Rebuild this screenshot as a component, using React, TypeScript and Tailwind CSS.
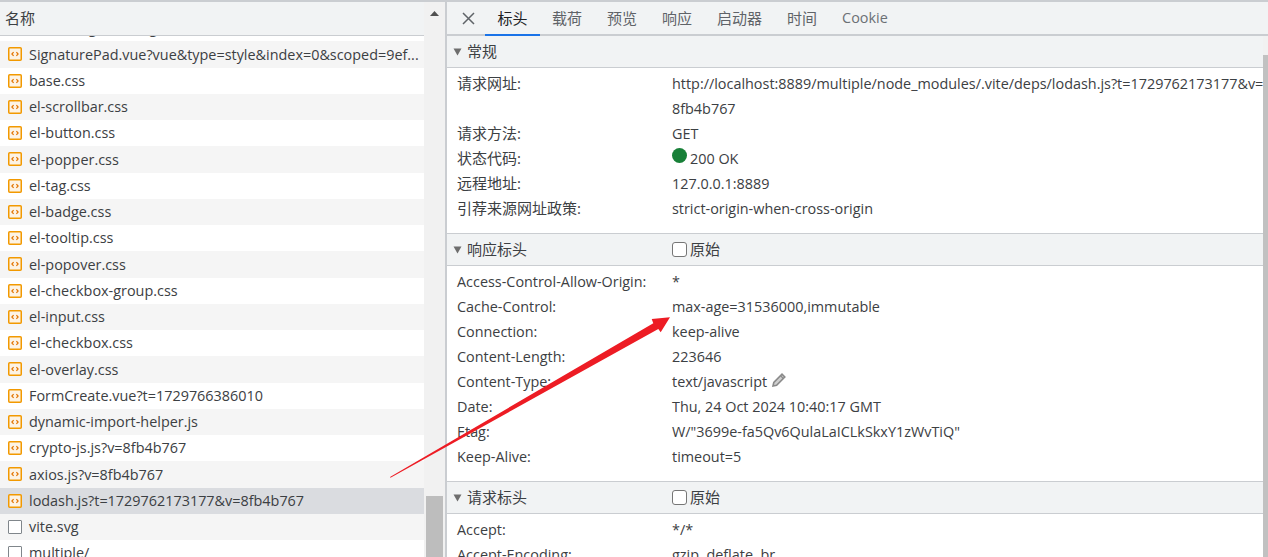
const FONT = "font-['Open_Sans','Noto_Sans_CJK_SC',sans-serif]";

const files: { name: string; kind: "code" | "blank" }[] = [
  { name: "SignaturePad.vue?vue&type=style&index=0&scoped=9ef...", kind: "code" },
  { name: "base.css", kind: "code" },
  { name: "el-scrollbar.css", kind: "code" },
  { name: "el-button.css", kind: "code" },
  { name: "el-popper.css", kind: "code" },
  { name: "el-tag.css", kind: "code" },
  { name: "el-badge.css", kind: "code" },
  { name: "el-tooltip.css", kind: "code" },
  { name: "el-popover.css", kind: "code" },
  { name: "el-checkbox-group.css", kind: "code" },
  { name: "el-input.css", kind: "code" },
  { name: "el-checkbox.css", kind: "code" },
  { name: "el-overlay.css", kind: "code" },
  { name: "FormCreate.vue?t=1729766386010", kind: "code" },
  { name: "dynamic-import-helper.js", kind: "code" },
  { name: "crypto-js.js?v=8fb4b767", kind: "code" },
  { name: "axios.js?v=8fb4b767", kind: "code" },
  { name: "lodash.js?t=1729762173177&v=8fb4b767", kind: "code" },
  { name: "vite.svg", kind: "blank" },
  { name: "multiple/", kind: "blank" },
];

function FileIcon({ kind }: { kind: "code" | "blank" }) {
  if (kind === "blank") {
    return <span className="block w-[14px] h-[14px] shrink-0 border-[1.5px] border-[#80868b] rounded-[1px] bg-white" />;
  }
  return (
    <svg width="14" height="14" viewBox="0 0 14 14" className="shrink-0">
      <rect x="0.75" y="0.75" width="12.5" height="12.5" rx="1" fill="#fdf3e4" stroke="#f29900" strokeWidth="1.5" />
      <path d="M5.6 5.2 3.9 7l1.7 1.8M8.4 5.2 10.1 7 8.4 8.8" fill="none" stroke="#e37400" strokeWidth="1.2" />
    </svg>
  );
}

function Caret() {
  return (
    <svg width="9" height="8" viewBox="0 0 9 8" className="shrink-0">
      <path d="M0.5 0.5h8L4.5 7.5z" fill="#6e6e6e" />
    </svg>
  );
}

function Raw() {
  return (
    <span className="flex items-center gap-[3px] absolute left-[225px]">
      <span className="block w-[15px] h-[15px] border-[1.5px] border-[#767676] rounded-[3px] bg-white" />
      <span>原始</span>
    </span>
  );
}

function SectionHead({ title, raw }: { title: string; raw?: boolean }) {
  return (
    <div className="relative h-[32px] shrink-0 flex items-center bg-[#f1f3f4] border-b border-[#cacdd1] pl-[6px] gap-[5px] text-[15px] text-[#3c4043]">
      <Caret />
      <span>{title}</span>
      {raw && <Raw />}
    </div>
  );
}

function KV({ k, cjk, children }: { k: string; cjk?: boolean; children: React.ReactNode }) {
  return (
    <div className="flex leading-[25px] text-[14.4px] text-[#3c4043]">
      <div className={`w-[215px] shrink-0 ${cjk ? "text-[15px]" : ""}`}>{k}</div>
      <div className="flex-1 whitespace-nowrap">{children}</div>
    </div>
  );
}

export default function App() {
  return (
    <div className={`relative w-[1268px] h-[557px] overflow-hidden bg-white flex border-t-2 border-[#cacdd1] ${FONT}`}>
      {/* left panel */}
      <div className="w-[445px] shrink-0 flex h-full">
        <div className="w-[424px] shrink-0 flex flex-col h-full overflow-hidden">
          <div className="h-[34px] shrink-0 bg-[#f1f3f4] border-b border-[#cacdd1] flex items-center pl-[5px] text-[15px] text-[#3c4043]">
            名称
          </div>
          <div className="flex-1 overflow-hidden">
            <div className="-mt-[21px] text-[14.4px] text-[#3c4043]">
              <div className="h-[26.25px] flex items-center bg-white pl-[8px] gap-[7px] whitespace-nowrap">
                <FileIcon kind="code" />
                <span>el-message-catalog.css</span>
              </div>
              {files.map((f, i) => (
                <div
                  key={f.name}
                  className={`h-[26.25px] flex items-center pl-[8px] gap-[7px] whitespace-nowrap ${
                    i === 17 ? "bg-[#dadce0]" : i % 2 === 0 ? "bg-[#f5f5f5]" : "bg-white"
                  }`}
                >
                  <FileIcon kind={f.kind} />
                  <span>{f.name}</span>
                </div>
              ))}
            </div>
          </div>
        </div>
        <div className="relative w-[21px] shrink-0 h-full bg-[#f1f1f1] flex flex-col items-center">
          <svg width="9" height="5" viewBox="0 0 9 5" className="mt-[9px] shrink-0">
            <path d="M4.5 0 9 5H0z" fill="#505050" />
          </svg>
          <div className="w-[17px] h-[61px] bg-[#bdbdbd] mt-auto" />
        </div>
      </div>

      {/* right panel */}
      <div className="flex-1 min-w-0 flex flex-col h-full border-l-2 border-[#cacdd1]">
        <div className="h-[34px] shrink-0 bg-[#f1f3f4] border-b-2 border-[#cacdd1] flex items-stretch text-[15px] text-[#5f6368] whitespace-nowrap">
          <div className="w-[38px] flex items-center pl-[15px] shrink-0">
            <svg width="13" height="13" viewBox="0 0 13 13">
              <path d="M1 1l11 11M12 1L1 12" stroke="#5f6368" strokeWidth="1.5" fill="none" />
            </svg>
          </div>
          <div className="relative px-[12px] flex items-center justify-center w-[55px] text-[#202124]">
            标头
            <span className="absolute left-0 right-0 -bottom-[2px] h-[2px] bg-[#1a73e8]" />
          </div>
          <div className="pl-[12px] pr-[12.5px] flex items-center">载荷</div>
          <div className="px-[12.5px] flex items-center">预览</div>
          <div className="px-[12.5px] flex items-center">响应</div>
          <div className="px-[12.5px] flex items-center">启动器</div>
          <div className="px-[12.5px] flex items-center">时间</div>
          <div className="px-[12.5px] flex items-center text-[14.4px] text-[#6b7075]">Cookie</div>
        </div>

        <div className="flex-1 min-h-0 flex">
          <div className="flex-1 min-w-0 overflow-hidden">
            <SectionHead title="常规" />
            <div className="pt-[3px] pb-[12px] pl-[10px]">
              <KV k="请求网址:" cjk>
                <div>http://localhost:8889/multiple/node_modules/.vite/deps/lodash.js?t=1729762173177&amp;v=</div>
                <div>8fb4b767</div>
              </KV>
              <KV k="请求方法:" cjk>GET</KV>
              <KV k="状态代码:" cjk>
                <span className="flex items-center gap-[3px]">
                  <span className="block w-[15px] h-[15px] rounded-full bg-[#188038] -mt-[6px]" />
                  200 OK
                </span>
              </KV>
              <KV k="远程地址:" cjk>127.0.0.1:8889</KV>
              <KV k="引荐来源网址政策:" cjk>strict-origin-when-cross-origin</KV>
            </div>

            <div className="border-t border-[#cacdd1]">
              <SectionHead title="响应标头" raw />
            </div>
            <div className="pt-[3px] pb-[12px] pl-[10px]">
              <KV k="Access-Control-Allow-Origin:">*</KV>
              <KV k="Cache-Control:">max-age=31536000,immutable</KV>
              <KV k="Connection:">keep-alive</KV>
              <KV k="Content-Length:">223646</KV>
              <KV k="Content-Type:">
                <span className="flex items-center gap-[4px]">
                  text/javascript
                  <svg width="16" height="16" viewBox="0 0 16 16" className="-mt-[3px]">
                    <path d="M2 14l.8-3.6L11 2.2l2.8 2.8-8.2 8.2z" fill="#cfcfcf" stroke="#8a8a8a" strokeWidth="1.6" />
                    <path d="M9.5 3.7l2.8 2.8" stroke="#8a8a8a" strokeWidth="1.2" />
                  </svg>
                </span>
              </KV>
              <KV k="Date:">Thu, 24 Oct 2024 10:40:17 GMT</KV>
              <KV k="Etag:">W/"3699e-fa5Qv6QulaLaICLkSkxY1zWvTiQ"</KV>
              <KV k="Keep-Alive:">timeout=5</KV>
            </div>

            <div className="border-t border-[#cacdd1]">
              <SectionHead title="请求标头" raw />
            </div>
            <div className="pt-[3px] pl-[10px]">
              <KV k="Accept:">*/*</KV>
              <KV k="Accept-Encoding:">gzip, deflate, br</KV>
            </div>
          </div>
          <div className="w-[5px] shrink-0 bg-[#f1f1f1] h-full flex flex-col">
            <div className="h-[19px] shrink-0" />
            <div className="flex-1 bg-[#c1c1c1]" />
          </div>
        </div>
      </div>

      {/* annotation arrow */}
      <svg className="absolute left-0 -top-[2px] pointer-events-none" width="1268" height="557" viewBox="0 0 1268 557">
        <path d="M390 477 L653.3 323.3 L651.7 319 L670 317.3 L660.7 332.3 L658.3 329 L390.5 477.8 Z" fill="#ed1c24" />
      </svg>
    </div>
  );
}
